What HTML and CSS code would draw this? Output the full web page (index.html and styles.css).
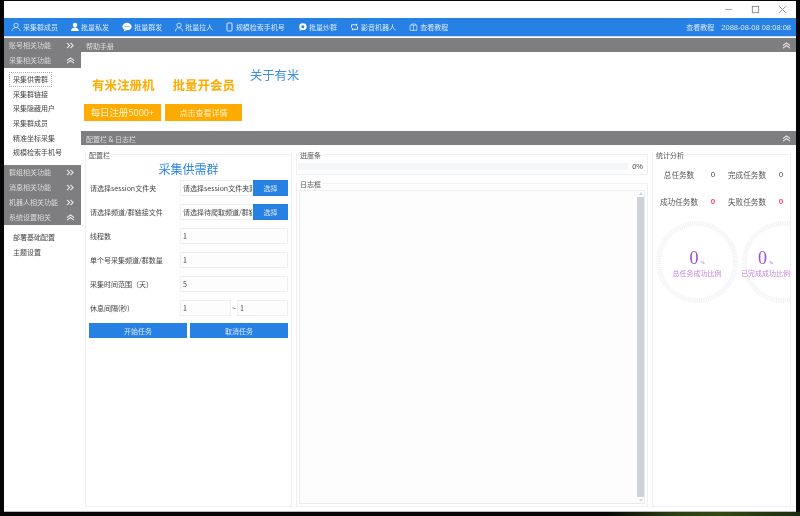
FILE: index.html
```html
<!DOCTYPE html>
<html lang="zh-CN">
<head>
<meta charset="utf-8">
<title>采集供需群</title>
<link rel="stylesheet" href="styles.css">
</head>
<body>
<div class="window">
  <div class="titlebar">
    <svg class="win" viewBox="0 0 10 10"><path d="M1 5h8" stroke="#aaa" stroke-width="1.2"/></svg>
    <svg class="win" viewBox="0 0 10 10"><rect x="1.5" y="1.5" width="7" height="7" fill="none" stroke="#888" stroke-width="1"/></svg>
    <svg class="win" viewBox="0 0 10 10"><path d="M1.5 1.5l7 7M8.5 1.5l-7 7" stroke="#888" stroke-width="1"/></svg>
  </div>
  <nav class="toolbar">
    <span class="tool"><svg width="10" height="10" viewBox="0 0 12 12"><circle cx="6" cy="4" r="2.6" fill="none" stroke="#d5e6fa"/><path d="M1 11c.5-3 2.500-4.400 5-4.400s4.500 1.400 5 4.400" fill="none" stroke="#d5e6fa"/></svg>采集群成员</span>
    <span class="tool"><svg width="8" height="10" viewBox="0 0 10 12"><circle cx="5" cy="3.500" r="2.800" fill="#fff"/><path d="M0 11c0-3 2-4.500 5-4.500s4 1.500 5 4.500z" fill="#fff"/></svg>批量私发</span>
    <span class="tool"><svg width="10" height="10" viewBox="0 0 12 12"><ellipse cx="6" cy="5.500" rx="5.500" ry="4.500" fill="#fff"/><path d="M3 9l-1 2.500 3-1.500z" fill="#fff"/><circle cx="3.700" cy="5.500" r=".7" fill="#2780e3"/><circle cx="6" cy="5.500" r=".7" fill="#2780e3"/><circle cx="8.300" cy="5.500" r=".7" fill="#2780e3"/></svg>批量群发</span>
    <span class="tool"><svg width="8" height="10" viewBox="0 0 10 12"><circle cx="5" cy="3.800" r="2.700" fill="none" stroke="#e3eefb"/><path d="M.5 11.500c.3-3 2-4.500 4.500-4.500s4.200 1.500 4.500 4.500" fill="none" stroke="#e3eefb"/></svg>批量拉人</span>
    <span class="tool narrow"><svg width="7" height="10" viewBox="0 0 7 10"><rect x="1" y="1" width="5" height="8" rx=".8" fill="none" stroke="#d5e6fa"/></svg>规模检索手机号</span>
    <span class="tool"><svg width="9" height="10" viewBox="0 0 12 12"><ellipse cx="6.500" cy="5.500" rx="5" ry="4.500" fill="#fff"/><circle cx="6.500" cy="5.500" r="2" fill="#2780e3"/><path d="M3 9l-1.500 2 3.500-1z" fill="#fff"/></svg>批量炒群</span>
    <span class="tool"><svg width="9" height="10" viewBox="0 0 12 12"><path d="M2 7V3h7M10 5v4H3" fill="none" stroke="#eef5fd" stroke-width="1.200"/><path d="M8 1l2 2-2 2zM4 7L2 9l2 2z" fill="#eef5fd"/></svg>影音机器人</span>
    <span class="tool"><svg width="9" height="10" viewBox="0 0 12 12"><path d="M1.500 3.500h9v7h-9zM6 3.500v7M3.500 3.500V2h5v1.500" fill="none" stroke="#d5e6fa"/></svg>查看教程</span>
    <span class="tool-right">查看教程</span>
    <span class="clock">2088-08-08 08:08:08</span>
  </nav>
  <div class="body">
    <aside class="sidebar">
      <div class="group">账号相关功能<svg class="chev" viewBox="0 0 10 8"><path d="M1 1l3 3-3 3M5 1l3 3-3 3" fill="none" stroke="#e4e4e4" stroke-width="1.300"/></svg></div>
      <div class="group">采集相关功能<svg class="chev" viewBox="0 0 10 8"><path d="M1 4l4-3 4 3M1 7l4-3 4 3" fill="none" stroke="#e4e4e4" stroke-width="1.300"/></svg></div>
      <ul class="items first">
        <li class="active">采集供需群</li>
        <li>采集群链接</li>
        <li>采集隐藏用户</li>
        <li>采集群成员</li>
        <li>精准坐标采集</li>
        <li>规模检索手机号</li>
      </ul>
      <div class="group">群组相关功能<svg class="chev" viewBox="0 0 10 8"><path d="M1 1l3 3-3 3M5 1l3 3-3 3" fill="none" stroke="#e4e4e4" stroke-width="1.300"/></svg></div>
      <div class="group">消息相关功能<svg class="chev" viewBox="0 0 10 8"><path d="M1 1l3 3-3 3M5 1l3 3-3 3" fill="none" stroke="#e4e4e4" stroke-width="1.300"/></svg></div>
      <div class="group">机器人相关功能<svg class="chev" viewBox="0 0 10 8"><path d="M1 1l3 3-3 3M5 1l3 3-3 3" fill="none" stroke="#e4e4e4" stroke-width="1.300"/></svg></div>
      <div class="group">系统设置相关<svg class="chev" viewBox="0 0 10 8"><path d="M1 4l4-3 4 3M1 7l4-3 4 3" fill="none" stroke="#e4e4e4" stroke-width="1.300"/></svg></div>
      <ul class="items second">
        <li>部署基础配置</li>
        <li>主题设置</li>
      </ul>
    </aside>
    <main class="main">
      <div class="bar">帮助手册<svg class="chev" viewBox="0 0 10 8"><path d="M1 4l4-3 4 3M1 7l4-3 4 3" fill="none" stroke="#e4e4e4" stroke-width="1.300"/></svg></div>
      <section class="help">
        <div class="promo">
          <div class="promo-titles"><span>有米注册机</span><span>批量开会员</span></div>
          <div class="promo-btns"><span class="orange big">每日注册5000+</span><span class="orange">点击查看详情</span></div>
        </div>
        <h2 class="about">关于有米</h2>
      </section>
      <div class="bar">配置栏 &amp; 日志栏<svg class="chev" viewBox="0 0 10 8"><path d="M1 4l4-3 4 3M1 7l4-3 4 3" fill="none" stroke="#e4e4e4" stroke-width="1.300"/></svg></div>
      <div class="panels">
        <section class="box config">
          <span class="legend">配置栏</span>
          <h1>采集供需群</h1>
          <div class="row"><label>请选择session文件夹</label><div class="field"><span class="input joined">请选择session文件夹路</span><span class="pick">选择</span></div></div>
          <div class="row"><label>请选择频道/群链接文件</label><div class="field"><span class="input joined">请选择待爬取频道/群链</span><span class="pick">选择</span></div></div>
          <div class="row"><label>线程数</label><div class="field"><span class="input">1</span></div></div>
          <div class="row"><label>单个号采集频道/群数量</label><div class="field"><span class="input">1</span></div></div>
          <div class="row"><label>采集时间范围（天）</label><div class="field"><span class="input">5</span></div></div>
          <div class="row"><label>休息间隔(秒)</label><div class="field range"><span class="input">1</span><i>~</i><span class="input">1</span></div></div>
          <div class="actions"><span class="act">开始任务</span><span class="act">取消任务</span></div>
        </section>
        <div class="center">
          <section class="box progress">
            <span class="legend">进度条</span>
            <div class="track"></div><span class="pct">0%</span>
          </section>
          <section class="box log">
            <span class="legend">日志框</span>
            <div class="logarea"><div class="scroll"><i class="up"></i><b></b><i class="down"></i></div></div>
          </section>
        </div>
        <section class="box stats">
          <span class="legend">统计分析</span>
          <div class="stat-grid">
            <span>总任务数</span><b>0</b><span>完成任务数</span><b>0</b>
            <span>成功任务数</span><b class="red">0</b><span>失败任务数</span><b class="red">0</b>
          </div>
          <div class="rings">
            <div class="ring"><svg class="dial" viewBox="0 0 82 82"><circle cx="41" cy="41" r="38.500" fill="none" stroke="#f1f3f6" stroke-width="5" stroke-dasharray="1.300 .9"/></svg><div class="num">0<small>%</small></div><div class="cap">总任务成功比例</div></div>
            <div class="ring cut"><svg class="dial" viewBox="0 0 82 82"><circle cx="41" cy="41" r="38.500" fill="none" stroke="#f1f3f6" stroke-width="5" stroke-dasharray="1.300 .9"/></svg><div class="num">0<small>%</small></div><div class="cap">已完成成功比例</div></div>
          </div>
        </section>
      </div>
    </main>
  </div>
</div>
</body>
</html>
```
FILE: styles.css
```css
* { box-sizing: border-box; }
html, body { margin: 0; height: 516px; overflow: hidden; }
body {
  padding: 1px 4px 4px 4px;
  font-family: "Noto Sans CJK SC", "Noto Sans", sans-serif;
  color: #444;
  background:
    linear-gradient(90deg, #070707 0, #070707 76%, #2c3d12 84%, #35480f 90%, #1c2a10 100%) bottom / 100% 4px no-repeat,
    #060606;
}
.window { width: 792px; height: 511px; background: #fff; display: flex; flex-direction: column; overflow: hidden; filter: blur(0.3px); border-bottom: 1px solid #bbb; }
.titlebar { height: 17px; flex: none; display: flex; justify-content: flex-end; align-items: center; gap: 17px; padding: 0 8px 0 0; background: #fff; }
.win { width: 9px; height: 9px; margin-right: 1px; }
.toolbar { height: 19px; flex: none; background: #2780e3; display: flex; align-items: center; padding-left: 7px; font-size: 7px; color: #dbe9fa; border-bottom: 1px solid #c6d9ef; }
.tool { display: flex; align-items: center; gap: 2px; margin-right: 13.100px; white-space: nowrap; }
.tool svg { flex: none; }
.tool.narrow { gap: 2.500px; }
.tool-right { margin-left: auto; margin-right: 7px; }
.clock { margin-right: 5px; white-space: nowrap; font-family: "Liberation Sans", sans-serif; font-size: 7.500px; }
.body { flex: 1; display: flex; min-height: 0; }
.sidebar { width: 77px; flex: none; padding-top: 1px; }
.group { height: 14.500px; margin-bottom: .5px; background: #7e7e80; color: #dcdcdc; font-size: 7px; display: flex; align-items: center; justify-content: space-between; padding: 0 6px 0 5px; white-space: nowrap; }
.chev { width: 9px; height: 7px; flex: none; }
.items { list-style: none; margin: 0; padding: 0 0 0 5px; font-size: 7px; }
.items.first { padding-top: 4px; height: 97px; }
.items.second { padding-top: 5px; }
.items li { height: 14.700px; line-height: 14.700px; padding-left: 4px; white-space: nowrap; }
.items li.active { width: 43px; border: 1px dotted #aaa; line-height: 12.700px; padding-left: 3px; }
.main { flex: 1; min-width: 0; padding: 1px 0 0 0; display: flex; flex-direction: column; }
.bar { height: 14px; flex: none; background: #7e7e80; color: #dcdcdc; font-size: 7px; display: flex; align-items: center; justify-content: space-between; padding: 1px 5px 0; }
.help { height: 79px; flex: none; display: flex; }
.promo { padding: 22px 0 0 3px; width: 169px; }
.promo-titles { display: flex; gap: 18px; padding-left: 8px; font-size: 12.500px; line-height: 22px; font-weight: 700; color: #ffab00; white-space: nowrap; }
.promo-btns { display: flex; gap: 4px; margin-top: 7.500px; }
.orange { width: 77px; height: 17px; background: #ffab00; color: #fff3d0; font-size: 8px; display: flex; align-items: center; justify-content: center; white-space: nowrap; flex: none; }
.orange.big { font-size: 9.400px; }
.about { margin: 12px 0 0 0; font-size: 12.300px; line-height: 22px; font-weight: 400; color: #3d8fe8; }
.panels { flex: 1; display: grid; grid-template-columns: 207px 352px 139px; column-gap: 4px; padding: 9px 4px 4px 4px; min-height: 0; }
.box { border: 1px solid #eff0f2; position: relative; }
.legend { position: absolute; left: 2px; top: -4px; background: #fff; font-size: 7px; line-height: 9px; padding: 0 1px; color: #555; }
.config { padding: 5px 3px 0 3px; }
.config h1 { margin: 0 0 3px; text-align: center; font-size: 12px; line-height: 17px; font-weight: 400; color: #2d86e6; }
.row { display: flex; align-items: center; height: 16px; margin-bottom: 8px; font-size: 7px; }
.row label { width: 91px; padding-left: 1px; flex: none; white-space: nowrap; }
.field { flex: 1; display: flex; min-width: 0; }
.input { flex: 1; min-width: 0; height: 16px; line-height: 14px; border: 1px solid #efefef; background: #fdfdfd; padding: 0 2px; overflow: hidden; white-space: nowrap; color: #444; }
.pick { width: 35px; height: 16px; flex: none; background: #2780e3; color: #dbe9fa; display: flex; align-items: center; justify-content: center; }
.range { align-items: center; }
.range i { width: 6px; text-align: center; font-style: normal; }
.actions { display: flex; gap: 3px; margin-top: -1px; }
.act { flex: 1; height: 15px; background: #2780e3; color: #dbe9fa; font-size: 7px; display: flex; align-items: center; justify-content: center; }
.center { display: flex; flex-direction: column; gap: 8px; min-height: 0; }
.progress { height: 21px; flex: none; display: flex; align-items: center; padding: 4px 4px 0 1px; }
.track { width: 330px; height: 7px; background: #f5f6f8; }
.pct { margin-left: auto; font-size: 7.500px; font-family: "Liberation Sans", sans-serif; }
.log { flex: 1; padding: 6px 2px 2px 2px; display: flex; min-height: 0; }
.logarea { flex: 1; border: 1px solid #e9eaed; border-top: 1px solid #efeff1; background: #fdfdfd; display: flex; justify-content: flex-end; }
.scroll { width: 7px; display: flex; flex-direction: column; align-items: center; }
.scroll b { flex: 1; width: 7px; background: #cfd3d8; }
.scroll i { width: 0; height: 0; flex: none; border-left: 2.500px solid transparent; border-right: 2.500px solid transparent; }
.scroll .up { border-bottom: 3px solid #d4d6da; margin: 1px 0 2px; }
.scroll .down { border-top: 3px solid #d4d6da; margin: 2px 0 1px; }
.stat-grid { display: grid; grid-template-columns: 44px 24px 44px 24px; grid-auto-rows: 27px; align-items: center; padding: 6px 0 0 4px; font-size: 7.600px; justify-items: center; white-space: nowrap; color: #555; }
.stat-grid b { font-weight: 400; font-family: "Liberation Sans", sans-serif; color: #444; font-size: 8px; }
.stat-grid b.red { color: #ff3d7f; font-weight: 700; }
.rings { display: flex; gap: 4px; margin-top: 6px; padding-left: 3px; overflow: hidden; }
.ring { width: 82px; height: 82px; flex: none; position: relative; display: flex; flex-direction: column; align-items: center; justify-content: center; padding-top: 8px; text-align: center; white-space: nowrap; }
.ring.cut { padding-right: 35px; }
.dial { position: absolute; left: 0; top: 0; width: 82px; height: 82px; }
.num { position: relative; font-family: "Liberation Serif", serif; font-size: 18px; line-height: 11px; color: #a04fc6; }
.num small { font-size: 5px; margin-left: 2px; }
.cap { position: relative; font-size: 7px; line-height: 11px; color: #c58ad8; }
```
